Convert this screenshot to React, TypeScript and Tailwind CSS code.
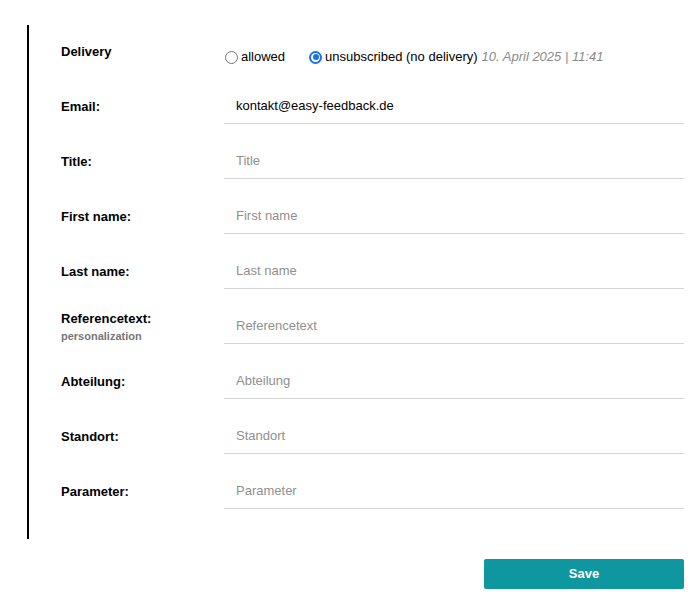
import React from "react";

const fields = [
  { label: "Email:", value: "kontakt@easy-feedback.de", placeholder: "Email" },
  { label: "Title:", value: "", placeholder: "Title" },
  { label: "First name:", value: "", placeholder: "First name" },
  { label: "Last name:", value: "", placeholder: "Last name" },
  { label: "Referencetext:", sub: "personalization", value: "", placeholder: "Referencetext" },
  { label: "Abteilung:", value: "", placeholder: "Abteilung" },
  { label: "Standort:", value: "", placeholder: "Standort" },
  { label: "Parameter:", value: "", placeholder: "Parameter" },
];

const Radio: React.FC<{ checked?: boolean }> = ({ checked }) =>
  checked ? (
    <span className="w-[13px] h-[13px] rounded-full bg-[#1a73e8] flex items-center justify-center">
      <span className="w-[9px] h-[9px] rounded-full bg-white flex items-center justify-center">
        <span className="w-[6px] h-[6px] rounded-full bg-[#1a73e8]" />
      </span>
    </span>
  ) : (
    <span className="w-[13px] h-[13px] rounded-full border border-[#767676] bg-white" />
  );

export default function App() {
  return (
    <div
      className="w-[700px] h-[610px] bg-white text-black pl-[27px] pt-[25px]"
      style={{ fontFamily: '"Liberation Sans", Arial, sans-serif' }}
    >
      <div className="w-[657px] border-l-2 border-black pl-[32px] pt-[18px] pb-[30px]">
        <div className="flex h-[26px]">
          <div className="w-[163px] text-[13px] font-bold leading-[18px]">Delivery</div>
          <div className="flex items-center h-[26px] text-[13px] mt-[1px] ml-[1px]">
            <label className="flex items-center gap-[3px]">
              <Radio />
              <span>allowed</span>
            </label>
            <label className="flex items-center gap-[3px] ml-[24px]">
              <Radio checked />
              <span>unsubscribed (no delivery)</span>
            </label>
            <span className="ml-[4px] italic text-[#8a8a8a]">10. April 2025 | 11:41</span>
          </div>
        </div>

        {fields.map((f) => (
          <div key={f.label} className="flex items-center mt-[17px] h-[38px]">
            <div className="w-[163px] flex flex-col">
              <span className="text-[13px] font-bold leading-[18px] mt-[3px]">{f.label}</span>
              {f.sub && (
                <span className="text-[11px] font-bold leading-[16px] text-[#777]">{f.sub}</span>
              )}
            </div>
            <input
              className="w-[460px] h-[38px] border-b border-[#d4d4d4] px-[12px] pt-[1px] text-[13px] text-black placeholder:text-[#8f8f8f] outline-none"
              placeholder={f.placeholder}
              defaultValue={f.value}
            />
          </div>
        ))}
      </div>

      <div className="w-[657px] flex justify-end mt-[20px]">
        <button className="w-[200px] h-[30px] rounded-[2px] bg-[#0e979e] text-white text-[13px] font-bold">
          Save
        </button>
      </div>
    </div>
  );
}
